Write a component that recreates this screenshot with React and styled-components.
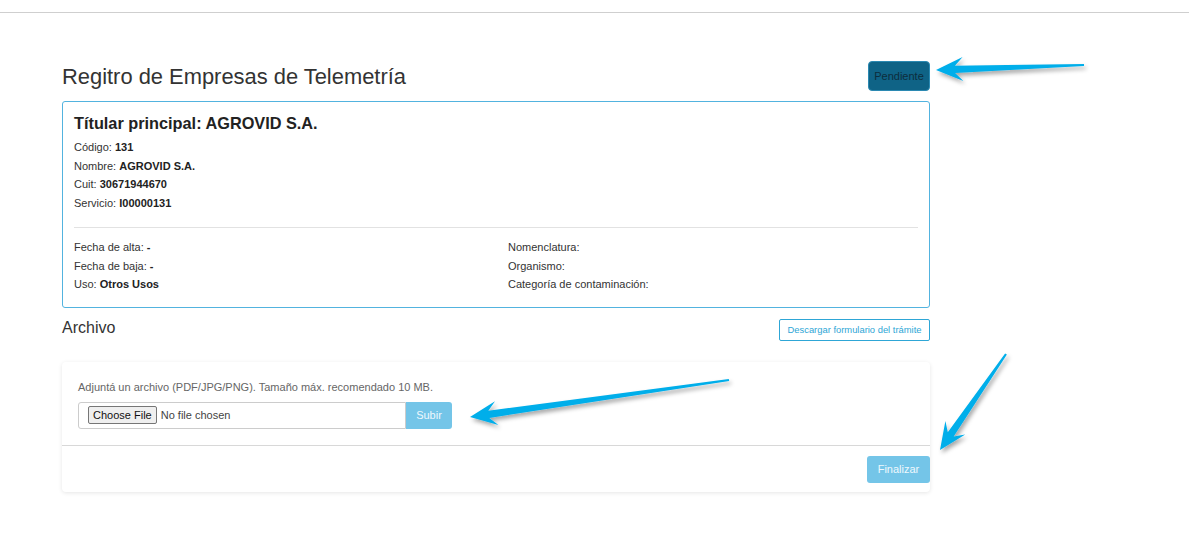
import React from "react";
import styled, { createGlobalStyle } from "styled-components";

const Global = createGlobalStyle`
  html, body { margin: 0; padding: 0; background: #fff; }
  body { font-family: "Liberation Sans", Arial, sans-serif; color: #333; }
  * { box-sizing: border-box; }
`;

const Page = styled.div`
  position: relative;
  width: 1189px;
  min-height: 548px;
`;

const TopBar = styled.div`
  height: 13px;
  border-bottom: 1px solid #cfcfcf;
`;

const Container = styled.main`
  width: 868px;
  margin: 48px 0 0 62px;
`;

const HeaderRow = styled.div`
  display: flex;
  align-items: center;
  justify-content: space-between;
  height: 30px;
`;

const Title = styled.h1`
  margin: 0;
  font-size: 21.9px;
  font-weight: 400;
  color: #333;
  padding-top: 2px;
`;

const StatusBadge = styled.button`
  height: 30px;
  width: 62px;
  padding: 0;
  border: 1px solid #2b89b2;
  border-radius: 4px;
  background: #0f6386;
  color: #0d2d3d;
  font-family: inherit;
  font-size: 11px;
`;

const Card = styled.section`
  margin-top: 10px;
  border: 1px solid #52b3df;
  border-radius: 3px;
  padding: 10px 11px 13px;
`;

const CardTitle = styled.h2`
  margin: 0 0 4px;
  font-size: 16.3px;
  line-height: 22px;
  font-weight: 700;
  color: #222;
`;

const Line = styled.div`
  font-size: 11px;
  line-height: 18.7px;
  color: #333;
  b { font-weight: 700; color: #222; }
`;

const Divider = styled.hr`
  margin: 14px 0 10px;
  border: 0;
  border-top: 1px solid #e2e2e2;
`;

const Columns = styled.div`
  display: grid;
  grid-template-columns: 434px 1fr;
`;

const SectionRow = styled.div`
  display: flex;
  justify-content: space-between;
  align-items: center;
  margin-top: 11px;
`;

const SectionTitle = styled.h3`
  margin: 0;
  font-size: 16px;
  font-weight: 400;
  color: #333;
  margin-top: -3px;
`;

const OutlineButton = styled.button`
  height: 22px;
  width: 151px;
  padding: 0;
  background: #fff;
  border: 1px solid #2ea6d6;
  border-radius: 2px;
  color: #2ea6d6;
  font-family: inherit;
  font-size: 9.4px;
`;

const Panel = styled.section`
  margin-top: 21px;
  border-radius: 4px;
  background: #fff;
  box-shadow: 0 1px 4px rgba(0, 0, 0, 0.1);
`;

const PanelBody = styled.div`
  padding: 19px 16px 16px;
  border-bottom: 1px solid #d8d8d8;
`;

const Help = styled.p`
  margin: 0 0 8px;
  font-size: 11px;
  line-height: 13px;
  color: #666;
`;

const UploadRow = styled.div`
  display: flex;
  align-items: stretch;
  height: 27px;
`;

const FileBox = styled.label`
  display: flex;
  align-items: center;
  width: 328px;
  border: 1px solid #ccc;
  border-radius: 3px 0 0 3px;
  padding: 0 9px;
  input {
    font-family: "Liberation Sans", Arial, sans-serif;
    font-size: 11px;
    color: #444;
  }
  input::file-selector-button {
    font-family: "Liberation Sans", Arial, sans-serif;
    font-size: 11px;
    color: #111;
    background: #efefef;
    border: 1px solid #767676;
    border-radius: 2px;
    padding: 2px 4px;
    margin-right: 4px;
  }
`;

const PrimaryButton = styled.button`
  height: 27px;
  width: ${(p) => p.$w}px;
  padding: 0;
  border: 0;
  border-radius: ${(p) => (p.$joined ? "0 3px 3px 0" : "3px")};
  background: #74c5e8;
  color: #eef8fd;
  font-family: inherit;
  font-size: 11px;
`;

const PanelFooter = styled.div`
  display: flex;
  justify-content: flex-end;
  padding: 10px 0 9px;
`;

const Overlay = styled.svg`
  position: absolute;
  left: 0;
  top: 0;
  pointer-events: none;
`;

function arrowPoints(tip, tail) {
  const dx = tail[0] - tip[0];
  const dy = tail[1] - tip[1];
  const L = Math.hypot(dx, dy);
  const ux = dx / L, uy = dy / L;
  const nx = -uy, ny = ux;
  const local = [
    [0, 0],
    [27, -12],
    [19, -3.6],
    [L, -1.1],
    [L, 1.1],
    [19, 3.6],
    [27, 12],
  ];
  return local
    .map(([a, b]) => `${(tip[0] + ux * a + nx * b).toFixed(1)},${(tip[1] + uy * a + ny * b).toFixed(1)}`)
    .join(" ");
}

const arrows = [
  { tip: [936, 70], tail: [1084, 65] },
  { tip: [470, 417], tail: [729, 380] },
  { tip: [940, 450], tail: [1006, 354] },
];

export default function App() {
  return (
    <Page>
      <Global />
      <TopBar />
      <Container>
        <HeaderRow>
          <Title>Regitro de Empresas de Telemetría</Title>
          <StatusBadge>Pendiente</StatusBadge>
        </HeaderRow>
        <Card>
          <CardTitle>Títular principal: AGROVID S.A.</CardTitle>
          <Line>Código: <b>131</b></Line>
          <Line>Nombre: <b>AGROVID S.A.</b></Line>
          <Line>Cuit: <b>30671944670</b></Line>
          <Line>Servicio: <b>I00000131</b></Line>
          <Divider />
          <Columns>
            <div>
              <Line>Fecha de alta: <b>-</b></Line>
              <Line>Fecha de baja: <b>-</b></Line>
              <Line>Uso: <b>Otros Usos</b></Line>
            </div>
            <div>
              <Line>Nomenclatura:</Line>
              <Line>Organismo:</Line>
              <Line>Categoría de contaminación:</Line>
            </div>
          </Columns>
        </Card>
        <SectionRow>
          <SectionTitle>Archivo</SectionTitle>
          <OutlineButton>Descargar formulario del trámite</OutlineButton>
        </SectionRow>
        <Panel>
          <PanelBody>
            <Help>Adjuntá un archivo (PDF/JPG/PNG). Tamaño máx. recomendado 10 MB.</Help>
            <UploadRow>
              <FileBox>
                <input type="file" accept=".pdf,.jpg,.png" />
              </FileBox>
              <PrimaryButton $w={46} $joined>Subir</PrimaryButton>
            </UploadRow>
          </PanelBody>
          <PanelFooter>
            <PrimaryButton $w={63}>Finalizar</PrimaryButton>
          </PanelFooter>
        </Panel>
      </Container>
      <Overlay width="1189" height="548" viewBox="0 0 1189 548">
        <defs>
          <filter id="sh" x="-20%" y="-20%" width="140%" height="160%">
            <feDropShadow dx="2" dy="3" stdDeviation="2.2" floodColor="#000" floodOpacity="0.35" />
          </filter>
        </defs>
        {arrows.map((a, i) => (
          <polygon key={i} points={arrowPoints(a.tip, a.tail)} fill="#05aeea" filter="url(#sh)" />
        ))}
      </Overlay>
    </Page>
  );
}
